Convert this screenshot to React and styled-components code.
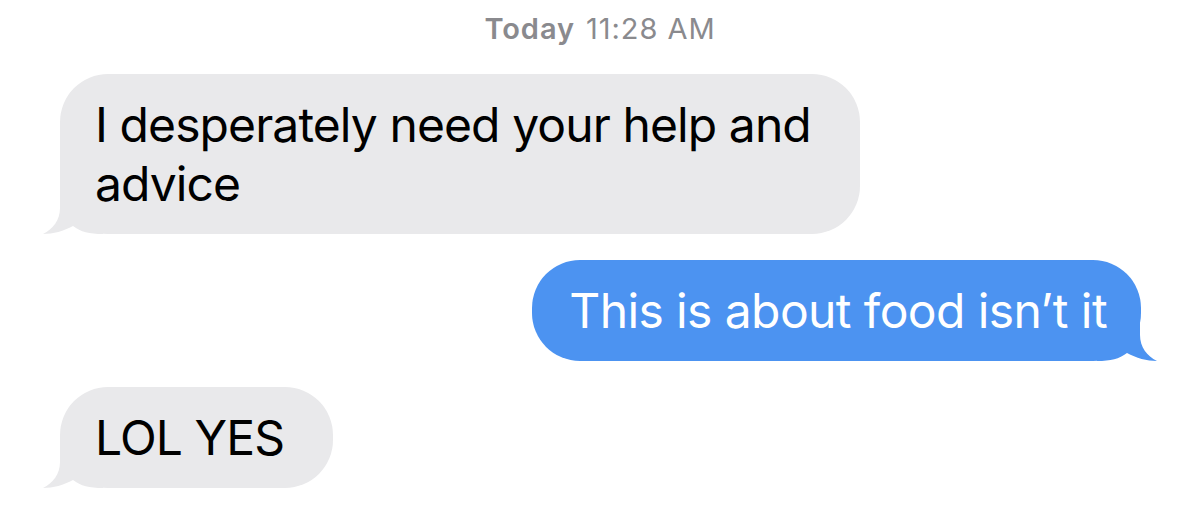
import React from "react";
import styled, { createGlobalStyle } from "styled-components";

const Global = createGlobalStyle`
  html, body { margin: 0; padding: 0; background: #ffffff; }
  body { font-family: Inter, "Open Sans", sans-serif; -webkit-font-smoothing: antialiased; }
`;

const Page = styled.div`
  width: 1200px;
  height: 507px;
  background: #ffffff;
  display: flex;
  flex-direction: column;
  overflow: hidden;
`;

const Stamp = styled.div`
  height: 57px;
  display: flex;
  align-items: center;
  justify-content: center;
  padding-bottom: 1px;
  box-sizing: border-box;
  font-size: 29px;
  color: #8a8a8e;
  letter-spacing: 0.95px;
  gap: 11px;
`;

const StampDay = styled.span`
  font-weight: 600;
`;

const Thread = styled.div`
  display: flex;
  flex-direction: column;
  gap: 26px;
  padding: 17px 59px 0 60px;
`;

const Row = styled.div`
  display: flex;
  justify-content: ${(p) => (p.$sent ? "flex-end" : "flex-start")};
`;

const Bubble = styled.div`
  position: relative;
  box-sizing: border-box;
  max-width: ${(p) => p.$max || "none"};
  padding: 21px ${(p) => (p.$sent ? "34px" : "49px")} 21px
    ${(p) => (p.$sent ? "37px" : "35px")};
  border-radius: 48px;
  background: ${(p) => (p.$sent ? "#4c93f1" : "#e9e9eb")};
  color: ${(p) => (p.$sent ? "#ffffff" : "#000000")};
  font-size: 48px;
  line-height: 59px;
  letter-spacing: ${(p) => (p.$sent ? "-0.6px" : "-0.9px")};
`;

const Text = styled.span`
  position: relative;
`;

const Tail = styled.svg`
  position: absolute;
  bottom: 0;
  ${(p) => (p.$sent ? "right: -16px; transform: scaleX(-1);" : "left: -17px;")}
  width: 60px;
  height: 48px;
  display: block;
`;

const TailShape = ({ sent }) => (
  <Tail $sent={sent} viewBox="0 0 60 48">
    <path
      d="M17 0 L17 22 C17 34 10 43 0 48 C10 48 21 45 30 40 C38 46 46 48 60 48 L60 0 Z"
      fill={sent ? "#4c93f1" : "#e9e9eb"}
    />
  </Tail>
);

const Message = ({ sent, max, children }) => (
  <Row $sent={sent}>
    <Bubble $sent={sent} $max={max}>
      <TailShape sent={sent} />
      <Text>{children}</Text>
    </Bubble>
  </Row>
);

export default function App() {
  return (
    <>
      <Global />
      <Page>
        <Stamp>
          <StampDay>Today</StampDay>
          <span>11:28 AM</span>
        </Stamp>
        <Thread>
          <Message max="800px">I desperately need your help and advice</Message>
          <Message sent>This is about food isn’t it</Message>
          <Message>LOL YES</Message>
        </Thread>
      </Page>
    </>
  );
}
